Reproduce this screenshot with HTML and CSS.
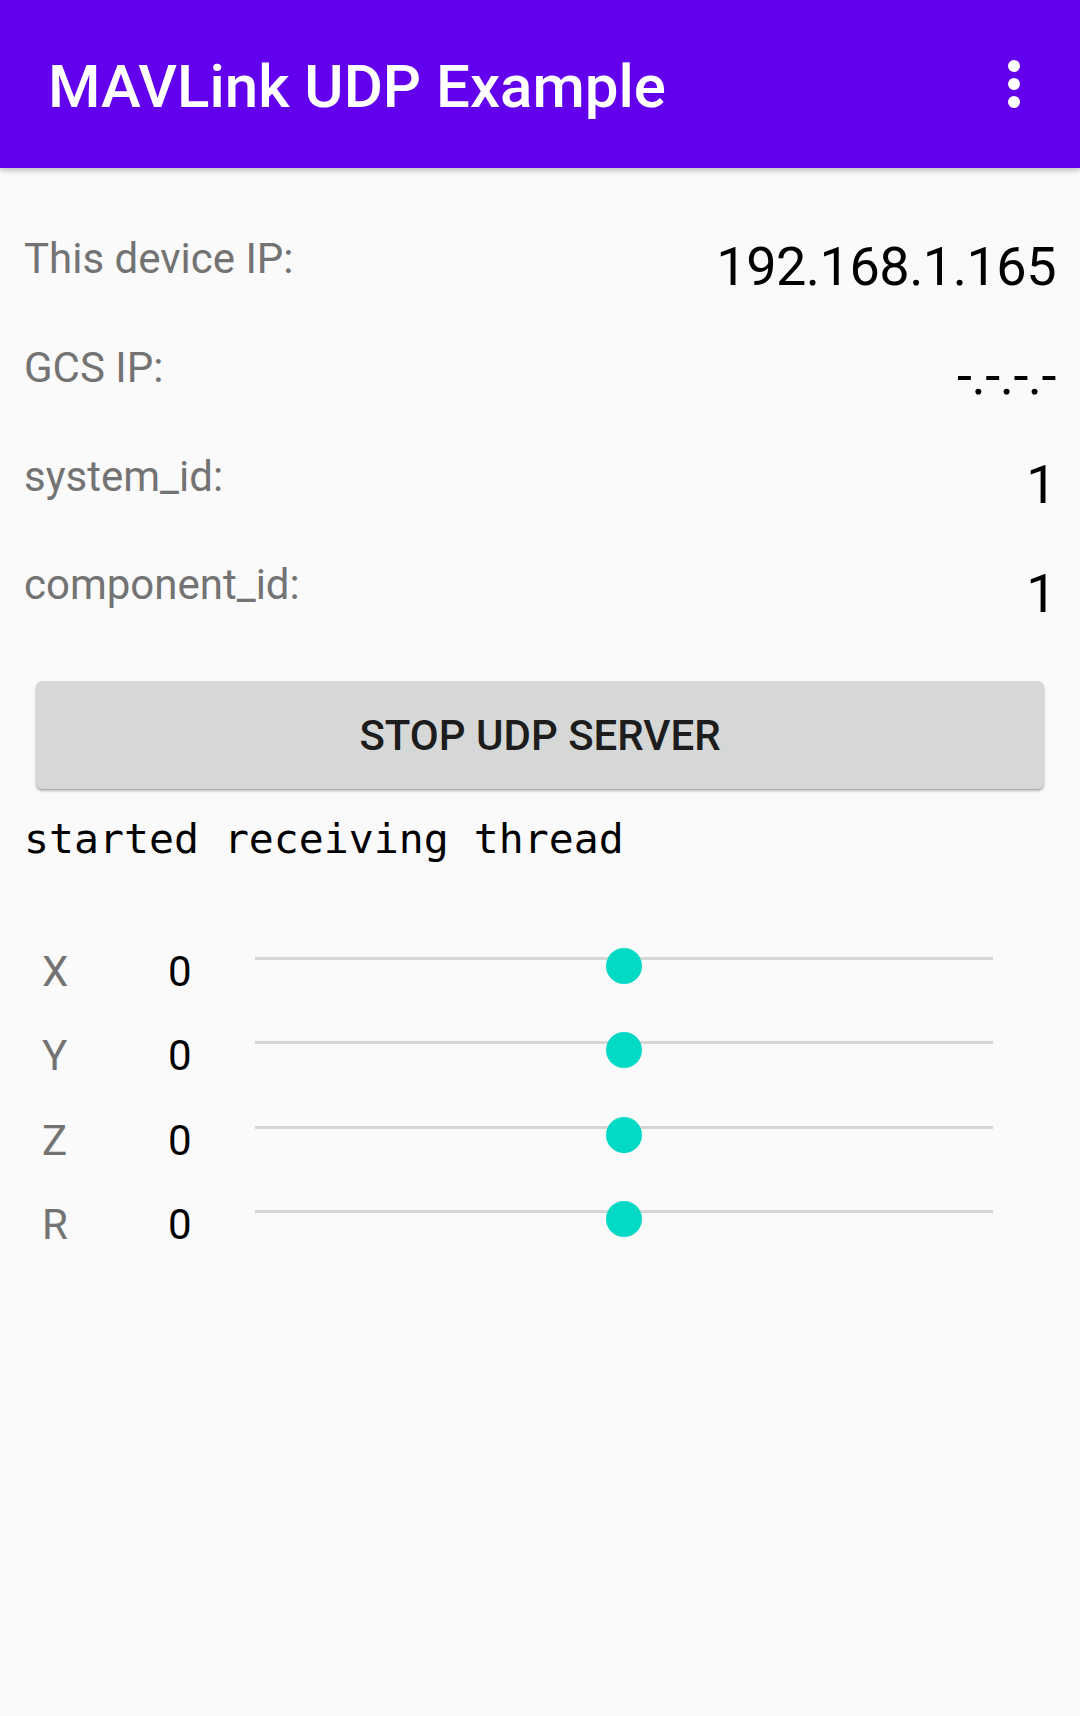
FILE: index.html
```html
<!DOCTYPE html>
<html lang="en">
<head>
<meta charset="utf-8">
<title>MAVLink UDP Example</title>
<link rel="stylesheet" href="styles.css">
</head>
<body>
<header class="appbar">
  <h1 class="appbar-title">MAVLink UDP Example</h1>
  <svg class="overflow" viewBox="0 0 24 24" aria-label="More options">
    <circle cx="12" cy="6" r="2"/>
    <circle cx="12" cy="12" r="2"/>
    <circle cx="12" cy="18" r="2"/>
  </svg>
</header>
<main class="content">
  <section class="info">
    <div class="info-row"><span class="info-label">This device IP:</span><span class="info-value">192.168.1.165</span></div>
    <div class="info-row"><span class="info-label">GCS IP:</span><span class="info-value">-.-.-.-</span></div>
    <div class="info-row"><span class="info-label">system_id:</span><span class="info-value">1</span></div>
    <div class="info-row"><span class="info-label">component_id:</span><span class="info-value">1</span></div>
  </section>
  <button class="btn" type="button">STOP UDP SERVER</button>
  <p class="log">started receiving thread</p>
  <section class="controls">
    <div class="ctrl-row"><span class="ctrl-label">X</span><span class="ctrl-value">0</span><div class="slider"><div class="track"></div><div class="thumb"></div></div></div>
    <div class="ctrl-row"><span class="ctrl-label">Y</span><span class="ctrl-value">0</span><div class="slider"><div class="track"></div><div class="thumb"></div></div></div>
    <div class="ctrl-row"><span class="ctrl-label">Z</span><span class="ctrl-value">0</span><div class="slider"><div class="track"></div><div class="thumb"></div></div></div>
    <div class="ctrl-row"><span class="ctrl-label">R</span><span class="ctrl-value">0</span><div class="slider"><div class="track"></div><div class="thumb"></div></div></div>
  </section>
</main>
</body>
</html>
```

FILE: styles.css
```css
* { box-sizing: border-box; }

html, body {
  margin: 0;
  padding: 0;
}

body {
  width: 1080px;
  height: 1716px;
  background: #fafafa;
  font-family: Roboto, "Noto Sans", sans-serif;
  overflow: hidden;
}

.appbar {
  height: 168px;
  background: #6200ee;
  display: flex;
  align-items: center;
  justify-content: space-between;
  padding: 0 30px 0 48px;
  box-shadow: 0 2px 6px rgba(0, 0, 0, 0.28);
  position: relative;
  z-index: 1;
}

.appbar-title {
  margin: 0;
  padding-top: 5px;
  color: #ffffff;
  font-size: 60px;
  font-weight: 500;
  line-height: 70px;
}

.overflow {
  width: 72px;
  height: 72px;
  fill: #ffffff;
}

.content {
  padding: 66px 24px 0 24px;
}

.info-row {
  display: flex;
  justify-content: space-between;
  align-items: flex-start;
  height: 108.8px;
}

.info-label {
  font-size: 42px;
  color: #737373;
  line-height: normal;
}

.info-value {
  font-size: 54px;
  color: #000000;
  line-height: normal;
  margin-top: 1.3px;
  letter-spacing: -0.5px;
}

.btn {
  display: block;
  width: 1008px;
  height: 108px;
  margin: 12px 0 0 12px;
  border: none;
  border-radius: 6px;
  background: #d6d7d7;
  box-shadow: 0 2px 3px rgba(0, 0, 0, 0.25), 0 1px 1px rgba(0, 0, 0, 0.12);
  font-family: Roboto, sans-serif;
  font-size: 42px;
  font-weight: 500;
  letter-spacing: 0;
  color: #1d1d1d;
  padding: 0;
}

.log {
  margin: 25px 0 0 0;
  font-family: "DejaVu Sans Mono", "Liberation Mono", monospace;
  font-size: 41.5px;
  line-height: normal;
  color: #000000;
}

.controls {
  margin-top: 84px;
  padding-left: 18px;
}

.ctrl-row {
  display: flex;
  align-items: flex-start;
  height: 84.3px;
}

.ctrl-label {
  width: 126px;
  font-size: 42px;
  line-height: normal;
  color: #737373;
}

.ctrl-value {
  width: 87px;
  font-size: 42px;
  line-height: normal;
  color: #000000;
}

.slider {
  position: relative;
  width: 738px;
  height: 40px;
}

.track {
  margin-top: 10px;
  height: 3px;
  background: #d6d6d6;
}

.thumb {
  position: absolute;
  left: 351px;
  top: 1px;
  width: 36px;
  height: 36px;
  border-radius: 50%;
  background: #03dac5;
}
```
